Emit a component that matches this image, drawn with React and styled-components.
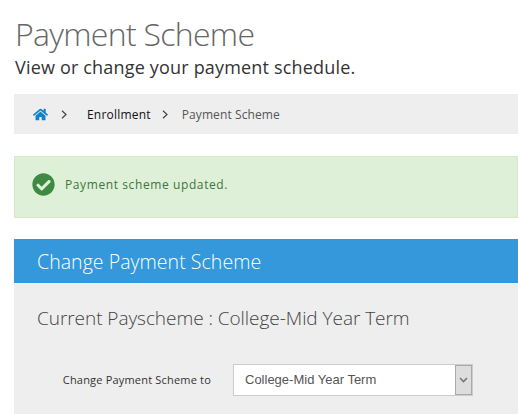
import React from 'react';
import styled, { createGlobalStyle } from 'styled-components';
import { FaHome, FaCheckCircle } from 'react-icons/fa';

const Global = createGlobalStyle`
  html, body { margin: 0; padding: 0; background: #fff; overflow: hidden; }
  body { font-family: "Open Sans", "Liberation Sans", sans-serif; }
`;

const Page = styled.div`
  width: 504px;
  height: 414px;
  margin-left: 14px;
  display: flex;
  flex-direction: column;
  overflow: hidden;
`;

const Title = styled.h1`
  margin: 14px 0 0 1px;
  font-size: 32px;
  line-height: 40px;
  font-weight: 300;
  letter-spacing: -0.7px;
  color: #666;
`;

const Subtitle = styled.p`
  margin: 0 0 0 1px;
  font-size: 18px;
  line-height: 26px;
  letter-spacing: 0.18px;
  color: #333;
`;

const Breadcrumb = styled.nav`
  margin-top: 14px;
  height: 40px;
  background: #eee;
  display: flex;
  align-items: center;
  padding-left: 19px;
  font-size: 12px;
`;

const Crumb = styled.span`
  color: ${(p) => (p.$active ? '#555' : '#111')};
  font-weight: ${(p) => (p.$active ? 400 : 500)};
  letter-spacing: ${(p) => (p.$active ? '0.1px' : '0.2px')};
`;

const Sep = styled.svg`
  width: 6px;
  height: 9px;
  margin: ${(p) => p.$margin};
  fill: none;
  stroke: #444;
  stroke-width: 1.2;
`;

const Alert = styled.div`
  margin-top: 22px;
  height: 62px;
  box-sizing: border-box;
  background: #dff0d8;
  border: 1px solid #d6e9c6;
  display: flex;
  align-items: center;
  padding: 0 0 6px 17px;
  gap: 10px;
  color: #3c763d;
  font-size: 12px;
  font-weight: 500;
  letter-spacing: 0.6px;
`;

const Panel = styled.section`
  margin-top: 21px;
  background: #eee;
  flex: 1;
`;

const PanelHeader = styled.h2`
  margin: 0;
  height: 44px;
  background: #3498db;
  color: #fff;
  font-size: 19.5px;
  font-weight: 300;
  line-height: 46px;
  letter-spacing: 0.05px;
  padding-left: 23px;
`;

const Current = styled.h3`
  margin: 22px 0 0 23px;
  font-size: 19px;
  line-height: 26px;
  font-weight: 300;
  letter-spacing: -0.05px;
  color: #444;
`;

const FormRow = styled.div`
  margin-top: 33px;
  display: flex;
  align-items: center;
`;

const Label = styled.label`
  width: 197px;
  margin-bottom: 2px;
  text-align: right;
  font-size: 11px;
  font-weight: 500;
  letter-spacing: 0.19px;
  color: #333;
`;

const Select = styled.div`
  margin-left: 22px;
  width: 240px;
  height: 32px;
  box-sizing: border-box;
  background: #fff;
  border: 1px solid #ccc;
  display: flex;
  align-items: stretch;
`;

const SelectValue = styled.span`
  flex: 1;
  padding-left: 11px;
  font-family: "Liberation Sans", Arial, sans-serif;
  font-size: 13px;
  line-height: 30px;
  color: #555;
`;

const SelectButton = styled.span`
  width: 15px;
  background: #ddd;
  border: 1px solid #aaa;
  display: flex;
  align-items: center;
  justify-content: center;
`;

const Chevron = styled.svg`
  width: 9px;
  height: 6px;
  fill: none;
  stroke: #777;
  stroke-width: 1.6;
`;

const SepIcon = ({ margin }) => (
  <Sep $margin={margin} viewBox="0 0 6 9"><path d="M1 .8 5 4.5 1 8.2" /></Sep>
);

export default function App() {
  return (
    <Page>
      <Global />
      <Title>Payment Scheme</Title>
      <Subtitle>View or change your payment schedule.</Subtitle>
      <Breadcrumb>
        <FaHome size={15} color="#0f82cc" />
        <SepIcon margin="0 20px 0 13px" />
        <Crumb>Enrollment</Crumb>
        <SepIcon margin="0 14px 0 11px" />
        <Crumb $active>Payment Scheme</Crumb>
      </Breadcrumb>
      <Alert>
        <FaCheckCircle size={23} color="#3f8a42" />
        <span>Payment scheme updated.</span>
      </Alert>
      <Panel>
        <PanelHeader>Change Payment Scheme</PanelHeader>
        <Current>Current Payscheme : College-Mid Year Term</Current>
        <FormRow>
          <Label>Change Payment Scheme to</Label>
          <Select>
            <SelectValue>College-Mid Year Term</SelectValue>
            <SelectButton>
              <Chevron viewBox="0 0 9 6"><path d="M1 1 4.5 4.5 8 1" /></Chevron>
            </SelectButton>
          </Select>
        </FormRow>
      </Panel>
    </Page>
  );
}
